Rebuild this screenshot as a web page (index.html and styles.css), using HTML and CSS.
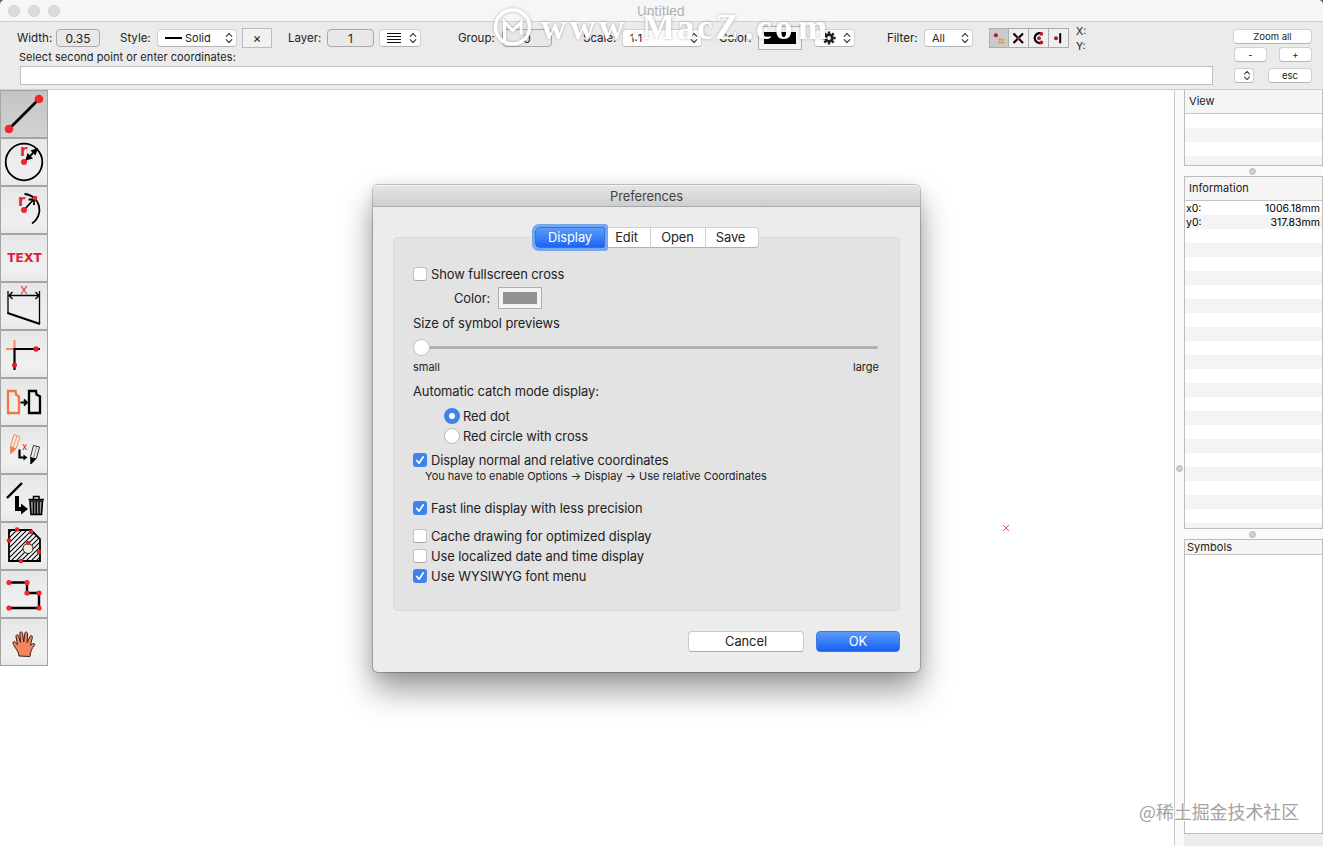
FILE: index.html
```html
<!DOCTYPE html>
<html lang="en">
<head>
<meta charset="utf-8">
<title>Untitled</title>
<link rel="stylesheet" href="styles.css">
</head>
<body>
<svg class="defs" width="0" height="0">
  <defs>
    <symbol id="updown" viewBox="0 0 8 12"><path d="M1.2 4.4 4 1.5 6.8 4.4M1.2 7.6 4 10.5 6.8 7.6" fill="none" stroke="#444" stroke-width="1.2" stroke-linecap="round" stroke-linejoin="round"/></symbol>
    <symbol id="tick" viewBox="0 0 14 14"><path d="M3.8 7.4 6 10.2 10.3 3.8" fill="none" stroke="#fff" stroke-width="1.6" stroke-linecap="round" stroke-linejoin="round"/></symbol>
  </defs>
</svg>
<div class="window">
  <header class="titlebar">
    <span class="light"></span><span class="light"></span><span class="light"></span>
    <span class="window-title">Untitled</span>
  </header>
  <section class="toolbar">
    <div class="toolbar-main">
      <div class="controls">
        <span class="label l-width">Width:</span>
        <span class="field f-width">0.35</span>
        <span class="label l-style">Style:</span>
        <span class="select s-style"><i class="dash"></i><span class="grow">Solid</span><svg class="ud"><use href="#updown"/></svg></span>
        <span class="square">×</span>
        <span class="label l-layer">Layer:</span>
        <span class="field f-layer">1</span>
        <span class="select s-lines"><svg width="14" height="12" viewBox="0 0 14 12"><path d="M0 1.5h14M0 4.5h14M0 7.5h14M0 10.5h14" stroke="#111"/></svg><svg class="ud"><use href="#updown"/></svg></span>
        <span class="label l-group">Group:</span>
        <span class="field f-group">0</span>
        <span class="label l-scale">Scale:</span>
        <span class="select s-scale"><span class="grow">1:1</span><svg class="ud"><use href="#updown"/></svg></span>
        <span class="label l-color">Color:</span>
        <span class="well"><i class="swatch black"></i></span>
        <span class="select s-gear"><svg width="14" height="14" viewBox="0 0 14 14"><g stroke="#222" stroke-width="2.5"><path d="M7 .4v13.2M.4 7h13.2M2.3 2.3l9.4 9.4M11.7 2.3l-9.4 9.4"/></g><circle cx="7" cy="7" r="4.6" fill="#222"/><circle cx="7" cy="7" r="1.9" fill="#fff"/></svg><svg class="ud"><use href="#updown"/></svg></span>
        <span class="label l-filter">Filter:</span>
        <span class="select s-filter"><span class="grow">All</span><svg class="ud"><use href="#updown"/></svg></span>
        <span class="snaps">
          <svg class="on" viewBox="0 0 19 18"><path d="M10.500 9v6.500M13.500 9v6.500M8.500 10.800h7M8.500 13.800h7" stroke="#d59a4e" stroke-width="1"/><circle cx="6.2" cy="6.2" r="2.1" fill="#b5172b"/></svg>
          <svg viewBox="0 0 19 18"><path d="M4.5 4.5 14 14M14 4.5 4.5 14" stroke="#000" stroke-width="2.2"/><circle cx="9.3" cy="9.2" r="1.8" fill="#b5172b"/></svg>
          <svg viewBox="0 0 19 18"><path d="M12.5 4.6A4.9 4.9 0 1 0 12.5 13.6" fill="none" stroke="#000" stroke-width="2.200"/><g fill="#b5172b"><circle cx="12.3" cy="4.8" r="1.9"/><circle cx="10" cy="9.2" r="1.9"/><circle cx="12.3" cy="13.5" r="1.9"/></g></svg>
          <svg viewBox="0 0 19 18"><circle cx="7" cy="9.3" r="2" fill="#b5172b"/><path d="M11.2 4.2v10" stroke="#000" stroke-width="2"/></svg>
        </span>
        <span class="xy"><span>X:</span><span>Y:</span></span>
      </div>
      <div class="prompt">Select second point or enter coordinates:</div>
      <div class="command"></div>
    </div>
    <div class="zoom">
      <span class="btn zoom-all">Zoom all</span>
      <div class="pair"><span class="btn minus">-</span><span class="btn minus">+</span></div>
      <div class="pair last"><span class="btn step"><svg class="ud"><use href="#updown"/></svg></span><span class="btn esc">esc</span></div>
    </div>
  </section>
  <main class="work">
    <nav class="tools">
      <span class="tool active"><svg viewBox="0 0 48 48"><path d="M9 39 39 9" stroke="#000" stroke-width="2.6"/><g fill="#f0262c"><circle cx="9" cy="39" r="4.3"/><circle cx="39" cy="9" r="4.3"/></g></svg></span>
      <span class="tool"><svg viewBox="0 0 48 48"><circle cx="24" cy="24" r="18.3" fill="none" stroke="#000" stroke-width="1.8"/><path d="M25 23 37 11" stroke="#000" stroke-width="1.8"/><path d="m38 10-7.500 2.500 5 5zM25.500 22.500l2-7.500 5.500 5.500z" fill="#000"/><circle cx="24" cy="24" r="3" fill="#f0262c"/><text x="20" y="18" class="r-text">r</text></svg></span>
      <span class="tool"><svg viewBox="0 0 48 48"><path d="M24.500 8A16 16 0 0 1 32 37.500" fill="none" stroke="#000" stroke-width="1.8"/><path d="M24 24 34 13M28.500 13.500h5.500v5.500" fill="none" stroke="#000" stroke-width="1.8"/><g fill="#f0262c"><circle cx="24" cy="24" r="3"/><circle cx="35" cy="12" r="2.300"/></g><text x="18" y="20" class="r-text">r</text></svg></span>
      <span class="tool"><svg viewBox="0 0 48 48"><text x="7" y="28" class="t-text" textLength="35" lengthAdjust="spacingAndGlyphs">TEXT</text></svg></span>
      <span class="tool"><svg viewBox="0 0 48 48"><path d="M8 9v23M39.500 9v33M9 13.500h30" stroke="#000" stroke-width="1.3"/><path d="M12.500 10 9 13.500l3.500 3.500M35.500 10l3.500 3.500-3.500 3.500" fill="none" stroke="#000" stroke-width="1.400"/><path d="M7.500 31 40 42" stroke="#000" stroke-width="2.200"/><text x="20.300" y="12" class="x-text">X</text></svg></span>
      <span class="tool"><svg viewBox="0 0 48 48"><path d="M14.500 10v9M6 19h9" stroke="#f58a5f" stroke-width="2"/><path d="M14.500 40V19H40" fill="none" stroke="#000" stroke-width="2.200"/><g fill="#e0202c"><circle cx="36" cy="19" r="2.700"/><circle cx="14.500" cy="35" r="2.500"/></g></svg></span>
      <span class="tool"><svg viewBox="0 0 48 48"><path d="M8 13h7.500l.5 3.500 3 2V35H8z" fill="none" stroke="#f2783f" stroke-width="2.300"/><path d="M29 13h7l.5 3.500 3.500 2V35H29z" fill="none" stroke="#000" stroke-width="2.300"/><path d="M20.500 24.500h6M24 21.500l3 3-3 3" fill="none" stroke="#000" stroke-width="1.800"/></svg></span>
      <span class="tool"><svg viewBox="0 0 48 48"><path d="M14 8.500 20 11 16.500 22l-6 5.500.2-8z" fill="#f6e4da" stroke="#ee9169"/><path d="M17 10 13.500 20.500" stroke="#ee9169" stroke-width=".8"/><path d="m10.700 20-.2 8 6-5.500z" fill="#f2783f"/><path d="M33.500 19.500 39.500 21 36.500 32l-5.700 6-.2-7.500z" fill="#eee" stroke="#333"/><path d="M36.500 21 33.800 31" stroke="#666" stroke-width=".7"/><path d="m30.600 31 .2 7.500 5.700-6z" fill="#000"/><path d="M19.500 23.500v8H25" fill="none" stroke="#000" stroke-width="2.200"/><path d="m23.500 28.500 4 3-4 3z"/><text x="22" y="23.500" class="small-x">x</text></svg></span>
      <span class="tool"><svg viewBox="0 0 48 48"><path d="M7 24 22 9" stroke="#000" stroke-width="2.400"/><path d="M17 22v13h6" fill="none" stroke="#000" stroke-width="4"/><path d="m21 29.500 7 5.500-7 5.500z"/><path d="M30 27h12.500L41.500 40.500h-10.500z" fill="#999" stroke="#000" stroke-width="1.600"/><path d="M28.500 25.500H44M33.500 25v-2.500h5.500V25M33.500 28v12M36.200 28v12M39 28v12" fill="none" stroke="#000" stroke-width="1.500"/></svg></span>
      <span class="tool"><svg viewBox="0 0 48 48"><defs><pattern id="hatch" width="5" height="5" patternUnits="userSpaceOnUse"><path d="M-1 6 6-1M-1 1 1-1M4 6 6 4" stroke="#000" stroke-width="1.100"/></pattern></defs><path d="M9 8h22l9 9v22H9z" fill="#f5f5f5"/><path d="M9 8h22l9 9v22H9z" fill="url(#hatch)" stroke="#000" stroke-width="1.800"/><circle cx="28" cy="26.500" r="5" fill="#e9eee4" stroke="#222"/><g fill="#e0202c"><circle cx="17" cy="7.500" r="2.300"/><circle cx="31" cy="10" r="2.300"/><circle cx="9" cy="18.500" r="2.300"/><circle cx="28" cy="21" r="2.300"/><circle cx="39" cy="30" r="2.300"/><circle cx="21" cy="39" r="2.300"/></g></svg></span>
      <span class="tool"><svg viewBox="0 0 48 48"><path d="M9 12.500h18V23h12v15H9" fill="none" stroke="#000" stroke-width="2.400"/><g fill="#f0262c"><circle cx="9" cy="12.500" r="2.600"/><circle cx="27" cy="12.500" r="2.600"/><circle cx="27" cy="23" r="2.600"/><circle cx="39" cy="23" r="2.600"/><circle cx="39" cy="38" r="2.600"/><circle cx="9" cy="38" r="2.600"/></g></svg></span>
      <span class="tool"><svg viewBox="0 0 48 48"><path d="M19 38c0-4-3-6.500-5-10.500-1.500-2.500-1.500-4 .3-3.800 1.500.3 2.200 2 3.200 3L16 19c-.5-2.500 2-3 2.600-.7l2 6-.8-8.500c-.2-2.500 2.400-2.600 2.800-.2l1.200 8.400 1-8.300c.3-2.500 2.800-2.300 2.700.2l-.3 8.700 2.600-5.700c1-2.200 3-1.400 2.500.9L30.500 27l1.800-1c1.800-1 3.400 0 2 1.500C32 30 30.500 33 30 38.500z" fill="#f2855c" stroke="#3a211a" stroke-width="1"/></svg></span>
    </nav>
    <section class="canvas"><svg class="cross" viewBox="0 0 8 8"><path d="m1 1 6 6M7 1 1 7" stroke="#e8566a" stroke-width="1"/></svg></section>
    <div class="split-v"><i class="knob"></i></div>
    <aside class="side">
      <section class="pane view"><h2 class="pane-head">View</h2><div class="stripes"></div></section>
      <div class="split-h"><i class="knob"></i></div>
      <section class="pane info"><h2 class="pane-head">Information</h2>
        <div class="stripes"><div class="row"><span>x0:</span><span>1006.18mm</span></div><div class="row"><span>y0:</span><span>317.83mm</span></div></div></section>
      <div class="split-h"><i class="knob"></i></div>
      <section class="pane symbols"><h2 class="pane-head short">Symbols</h2></section>
    </aside>
  </main>

  <section class="dialog">
    <header class="dialog-title">Preferences</header>
    <div class="tabs"><span class="tab current">Display</span><span class="tab t-edit">Edit</span><span class="tab t-open">Open</span><span class="tab t-save">Save</span></div>
    <div class="group">
      <div class="opt first"><i class="check"></i>Show fullscreen cross</div>
      <div class="color-row"><span class="color-label">Color:</span><span class="well small"><i class="swatch gray"></i></span></div>
      <div class="line">Size of symbol previews</div>
      <div class="slider"><i class="thumb"></i></div>
      <div class="ends"><span>small</span><span>large</span></div>
      <div class="line catch">Automatic catch mode display:</div>
      <div class="opt radio-row"><i class="radio on"></i>Red dot</div>
      <div class="opt radio-row"><i class="radio"></i>Red circle with cross</div>
      <div class="opt coords"><svg class="check on"><use href="#tick"/></svg>Display normal and relative coordinates</div>
      <div class="hint">You have to enable Options → Display → Use relative Coordinates</div>
      <div class="opt fast"><svg class="check on"><use href="#tick"/></svg>Fast line display with less precision</div>
      <div class="opt cache"><i class="check"></i>Cache drawing for optimized display</div>
      <div class="opt"><i class="check"></i>Use localized date and time display</div>
      <div class="opt"><svg class="check on"><use href="#tick"/></svg>Use WYSIWYG font menu</div>
    </div>
    <footer class="actions"><span class="button cancel">Cancel</span><span class="button ok">OK</span></footer>
  </section>

  <svg class="watermark" viewBox="0 0 350 50">
    <circle cx="27.500" cy="27" r="17" fill="none" stroke="#fff" stroke-width="3.500"/>
    <path d="M19.500 42V22.500l8.300 8 8.300-8v12" fill="none" stroke="#fff" stroke-width="3"/>
    <text x="56 85 114 146 157 192 212 230 260 271 290 313" y="39" class="mark-text">www.MacZ.com</text>
  </svg>
  <span class="credit">@稀土掘金技术社区</span>
</div>
</body>
</html>
```
FILE: styles.css
```css
* { box-sizing: border-box; }
body { margin: 0; background: #5b5a73; font-family: Inter, "Liberation Sans", sans-serif; font-size: 11px; color: #222; }
.defs { position: absolute; }
.window { position: relative; width: 1323px; height: 846px; display: flex; flex-direction: column; overflow: hidden; background: #fff; border-radius: 5px 5px 0 0; }
svg { display: block; flex: none; }
.ud { width: 8px; height: 12px; }

.titlebar { display: flex; align-items: center; gap: 8px; height: 22px; flex: none; padding-left: 8px; background: #f6f6f6; border-bottom: 1px solid #d2d2d2; }
.light { width: 12px; height: 12px; border-radius: 50%; background: #dcdcdc; border: 1px solid #d2d2d2; }
.window-title { margin-left: 569px; font-size: 13px; color: #b0b0b0; }

.toolbar { display: flex; flex: none; height: 68px; background: #ebebeb; border-bottom: 1px solid #cdcdcd; }
.toolbar-main { width: 1213px; }
.controls { display: flex; align-items: center; height: 24px; margin-top: 4px; white-space: nowrap; }
.label { flex: none; font-size: 11.500px; }
.l-width { margin-left: 17px; width: 39px; }
.l-style { margin-left: 20px; width: 37px; }
.l-layer { margin-left: 16px; width: 39px; }
.l-group { margin-left: 37px; width: 44px; }
.l-scale { margin-left: 31px; width: 39px; }
.l-color { margin-left: 17px; width: 39px; }
.l-filter { margin-left: 32px; width: 37px; }
.field { flex: none; height: 18px; border: 1px solid #a9a9a9; border-radius: 4px; background: #e8e8e8; font-size: 12px; line-height: 17px; text-align: center; }
.f-width { width: 44px; }
.f-layer { width: 47px; }
.f-group { width: 50px; }
.select { display: flex; align-items: center; justify-content: space-between; flex: none; height: 18px; padding: 0 3px 0 7px; background: #fff; border: 1px solid #d0d0d0; border-bottom-color: #b5b5b5; border-radius: 4px; }
.grow { flex: 1; }
.s-style { width: 80px; }
.dash { width: 17px; height: 2px; margin-right: 3px; background: #000; }
.s-lines { width: 42px; margin-left: 5px; }
.s-scale { width: 80px; }
.s-gear { width: 41px; margin-left: 12px; }
.s-filter { width: 49px; }
.square { flex: none; width: 30px; height: 20px; margin-left: 5px; border: 1px solid #bcbcbc; background: #f1f1f1; text-align: center; font-size: 13px; line-height: 18px; }
.well { display: flex; flex: none; width: 44px; height: 24px; padding: 5px; border: 1px solid #aeaeae; background: #f3f3f3; }
.swatch { flex: 1; }
.black { background: #000; }
.gray { background: #929292; }
.snaps { display: flex; gap: 1px; flex: none; width: 80px; height: 20px; margin-left: 16px; padding: 1px; background: #adadad; }
.snaps svg { width: 19px; height: 18px; background: #efefef; }
.snaps svg.on { background: #cacaca; width: 18px; }
.xy { display: flex; flex-direction: column; gap: 2px; margin: 2px 0 0 7px; font-size: 10.500px; line-height: 13px; }
.prompt { height: 14px; margin: 0 0 0 19px; line-height: 14px; letter-spacing: .06px; }
.command { width: 1193px; height: 19px; margin: 2px 0 0 20px; background: #fff; border: 1px solid #bfbfbf; }
.zoom { width: 79px; margin: 7px 0 0 20px; font-size: 9.500px; }
.btn { display: flex; align-items: center; justify-content: center; height: 15px; background: #fff; border: 1px solid #d0d0d0; border-bottom-color: #b5b5b5; border-radius: 4px; }
.pair { display: flex; justify-content: space-between; margin: 3px 0 0 1px; }
.last { margin-top: 6px; }
.minus { width: 33px; }
.step { width: 20px; padding-left: 6px; }
.step .ud { height: 11px; }
.esc { width: 44px; }

.work { display: flex; flex: 1; min-height: 0; }
.tools { width: 48px; flex: none; }
.tool { display: block; width: 48px; height: 48px; border: 1px solid #a4a4a4; background: linear-gradient(#e6e6e6, #f0f0f0 70%, #e9e9e9); }
.tool svg { width: 48px; height: 48px; margin: -1px; }
.active { background: linear-gradient(#c4c4c4, #d2d2d2); }
.r-text { font: bold 15px "DejaVu Sans", sans-serif; fill: #f0262c; }
.t-text { font: 800 11.500px Inter, sans-serif; fill: #e21d37; }
.x-text { font: 11px Inter, sans-serif; fill: #e0203a; }
.small-x { font: 10px Inter, sans-serif; fill: #e0203a; }
.canvas { flex: 1; display: flex; }
.cross { width: 8px; height: 8px; margin: 434px 0 0 954px; }
.split-v { display: flex; align-items: center; justify-content: center; width: 10px; border-left: 1px solid #c8c8c8; background: #fafafa; }
.knob { width: 7px; height: 7px; border-radius: 50%; background: #d0d0d0; border: 1px solid #b8b8b8; }
.side { width: 139px; display: flex; flex-direction: column; background: #ececec; }
.pane { flex: none; background: #fff; border: 1px solid #bdbdbd; }
.pane-head { height: 24px; margin: 0; padding-left: 4px; border-bottom: 1px solid #c4c4c4; background: #f5f5f5; font-size: 11px; font-weight: 400; line-height: 23px; letter-spacing: .05px; }
.short { height: 15px; padding-left: 2px; line-height: 15px; }
.view { height: 76px; border-top: 0; }
.stripes { height: 327px; background: repeating-linear-gradient(#fff 0 14px, #f4f4f4 14px 28px); }
.view .stripes { height: 51px; }
.info { height: 353px; }
.symbols { height: 295px; }
.split-h { display: flex; align-items: center; justify-content: center; height: 10px; padding-right: 2px; background: #fafafa; }
.row { display: flex; justify-content: space-between; height: 14px; padding: 0 2px 0 1px; line-height: 15px; color: #000; font-size: 10.500px; }

.dialog { position: absolute; left: 373px; top: 185px; width: 547px; height: 487px; border-radius: 5px; background: #ececec; box-shadow: 0 0 0 1px rgba(0,0,0,.2), 0 18px 32px rgba(0,0,0,.4), 0 2px 14px rgba(0,0,0,.1); font-size: 12.900px; letter-spacing: -.06px; white-space: nowrap; }
.dialog-title { height: 22px; border-radius: 5px 5px 0 0; border-bottom: 1px solid #a9a9a9; background: linear-gradient(#e6e6e6, #cecece); box-shadow: inset 0 1px #f4f4f4; text-align: center; line-height: 23px; color: #444; }
.tabs { position: relative; display: flex; width: 226px; height: 21px; margin: 20px 0 0 160px; z-index: 1; }
.tab { display: flex; align-items: center; justify-content: center; padding-bottom: 1px; background: #fff; border: 1px solid #cfcfcf; border-bottom-color: #b3b3b3; border-left-width: 0; }
.current { width: 70px; margin-left: 2px; border: 1px solid #3474d9; border-radius: 4px 1px 1px 4px; background: linear-gradient(#5b9bf8, #1b66f2); box-shadow: 0 0 0 3px #75a6ee; color: #fff; z-index: 1; }
.t-edit { width: 46px; padding-right: 2px; }
.t-open { width: 55px; padding-right: 1px; }
.t-save { width: 53px; border-radius: 0 4px 4px 0; padding-right: 3px; }
.group { width: 507px; height: 374px; margin: -11px 0 0 20px; padding: 26px 21px 0 20px; border: 1px solid #dadada; border-radius: 4px; background: #e3e3e3; }
.opt { display: flex; align-items: center; gap: 4px; height: 20px; margin-left: -1px; }
.check { width: 14px; height: 14px; flex: none; border: 1px solid #c2c2c2; border-bottom-color: #aaa; border-radius: 3px; background: #fff; }
.check.on { border: 0; background: #3f82ea; }
.radio-row { margin-left: 30px; gap: 3px; }
.radio { width: 16px; height: 16px; border: 1px solid #b9b9b9; border-radius: 50%; background: #fff; }
.radio.on { border: 5px solid #3f82ea; }
.color-row { display: flex; align-items: center; height: 22px; margin: 3px 0 0 40px; }
.color-label { width: 44px; }
.small { height: 22px; padding: 4px; }
.line { height: 20px; margin-top: 5px; margin-left: -1px; line-height: 20px; }
.slider { position: relative; height: 3px; margin: 12px 0 0; background: #b0b0b0; border-radius: 2px; }
.thumb { position: absolute; left: -1px; top: -7px; width: 17px; height: 17px; border-radius: 50%; background: #fff; border: 1px solid #c0c0c0; }
.ends { display: flex; justify-content: space-between; height: 14px; margin: 11px -1px 0 -1px; font-size: 11px; line-height: 14px; letter-spacing: 0; }
.catch { margin-top: 8px; margin-bottom: 4px; }
.coords { margin-top: 4px; }
.hint { height: 14px; margin: -1px 0 0 11px; font-size: 11px; line-height: 14px; letter-spacing: .01px; }
.fast { margin-top: 15px; }
.cache { margin-top: 8px; }
.actions { display: flex; gap: 12px; margin: 20px 0 0 315px; }
.button { display: flex; align-items: center; justify-content: center; height: 21px; padding-bottom: 1px; border-radius: 4px; }
.cancel { width: 116px; background: #fff; border: 1px solid #c9c9c9; border-bottom-color: #aaa; }
.ok { width: 84px; background: linear-gradient(#5c9bf8, #1561f3); border: 1px solid #3d7ce2; color: #fff; }

.watermark { position: absolute; left: 485px; top: 0; width: 350px; height: 50px; filter: drop-shadow(0 0 1.500px rgba(0,0,0,.28)); }
.mark-text { font: bold 35px "Liberation Serif", serif; fill: #fff; }
.credit { position: absolute; left: 1139px; top: 799px; font: 17.900px/25px "Noto Sans CJK SC", sans-serif; color: #a2a2a2; text-shadow: 1px 1px 1px #fff, -1px -1px 1px #fff; white-space: nowrap; }
```
